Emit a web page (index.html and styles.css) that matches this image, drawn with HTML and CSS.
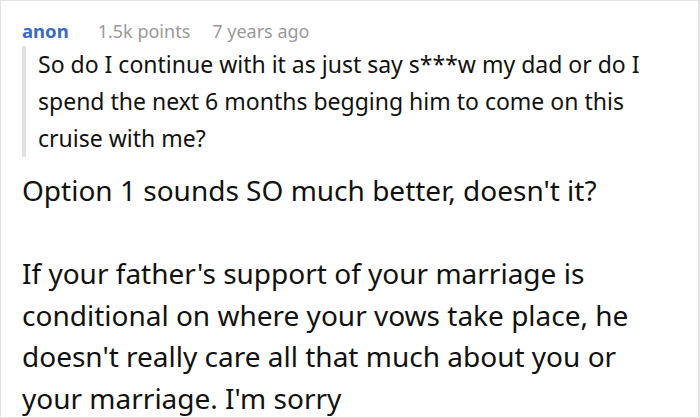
FILE: index.html
```html
<!DOCTYPE html>
<html>
<head>
<meta charset="utf-8">
<link rel="stylesheet" href="styles.css">
</head>
<body>
<div class="frame">
  <div class="meta">
    <span class="author">anon</span>
    <span class="points">1.5k points</span>
    <span class="age">7 years ago</span>
  </div>
  <blockquote class="quote">So do I continue with it as just say s***w my dad or do I spend the next 6 months begging him to come on this cruise with me?</blockquote>
  <div class="body">
    <p class="para">Option 1 sounds SO much better, doesn't it?</p>
    <p class="para">If your father's support of your marriage is conditional on where your vows take place, he doesn't really care all that much about you or your marriage. I'm sorry</p>
  </div>
</div>
</body>
</html>
```
FILE: styles.css
```css
html, body {
  margin: 0;
  padding: 0;
  background: #fff;
}
.frame {
  box-sizing: border-box;
  width: 700px;
  height: 418px;
  border: 1px solid #e3e3e3;
  border-right-width: 2px;
  overflow: hidden;
  padding: 18px 0 0 21px;
  font-family: "Noto Sans", sans-serif;
  color: #111;
}
.meta {
  display: flex;
  align-items: baseline;
  font-size: 18px;
  line-height: 24px;
  color: #999;
}
.author {
  color: #3a6bbf;
  font-weight: bold;
  font-size: 18.5px;
  margin-right: 29px;
}
.points {
  margin-right: 22px;
}
.quote {
  margin: 3px 0 0 0;
  padding: 0 0 0 12px;
  border-left: 4px solid #e0e0e0;
  font-size: 23px;
  line-height: 37px;
  width: 640px;
  color: #111;
}
.body {
  margin-top: 13px;
  width: 625px;
  font-size: 28px;
  line-height: 41.5px;
}
.para {
  margin: 0 0 41.5px 0;
}
```
